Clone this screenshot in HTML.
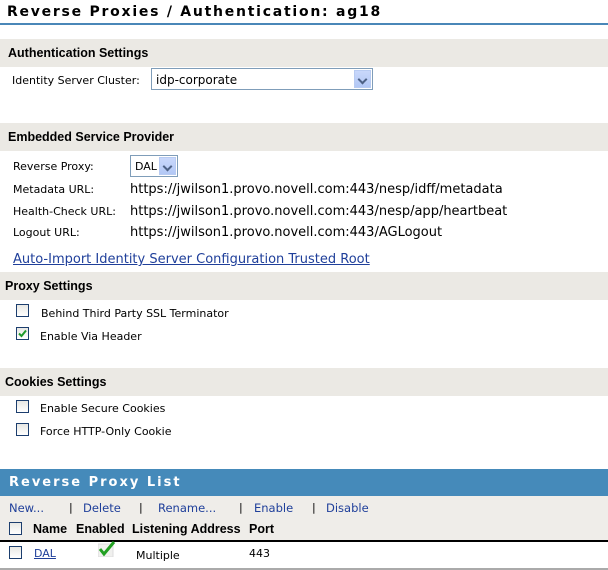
<!DOCTYPE html>
<html><head><style>
*{margin:0;padding:0;box-sizing:border-box}
body{width:608px;height:570px;position:relative;background:#fff;font-family:"DejaVu Sans",Verdana,sans-serif;font-size:11px;color:#000;overflow:hidden}
.a{position:absolute;white-space:nowrap;line-height:14px}
.hd{position:absolute;left:0;width:608px;background:#ebe9e4;font-weight:bold;font-size:12.5px;font-family:"Liberation Sans",sans-serif;padding-left:8px;line-height:28px}
.th{font-family:"Liberation Sans",sans-serif;font-weight:bold;font-size:12.5px}
.lk{color:#1f3f9a}
.cb{position:absolute;width:13px;height:13px;border:1px solid #1c3e6e;background:linear-gradient(#e8e8e4,#fff)}
.sel{position:absolute;border:1px solid #7f9db9;background:#fff}
.arr{position:absolute;right:1px;top:1px;bottom:1px;width:17px;background:linear-gradient(#c9d8fb,#b2c8f5);border:1px solid #b8cbf2}
.arr:after{content:"";position:absolute;left:4px;top:5px;width:5px;height:5px;border-right:2px solid #4d6185;border-bottom:2px solid #4d6185;transform:rotate(45deg)}
</style></head><body>
<div class="a" style="left:7px;top:3px;font-size:14px;font-weight:bold;letter-spacing:1.75px;line-height:18px">Reverse Proxies / Authentication: ag18</div>
<div style="position:absolute;left:0;top:23px;width:608px;height:2px;background:#4a87b8"></div>

<div class="hd" style="top:39px">Authentication Settings</div>
<div class="a" style="left:12px;top:74px">Identity Server Cluster:</div>
<div class="sel" style="left:151px;top:68px;width:222px;height:22px"><span class="a" style="left:4px;top:4px;font-size:12px">idp-corporate</span><div class="arr"></div></div>

<div class="hd" style="top:123px">Embedded Service Provider</div>
<div class="a" style="left:13px;top:160px">Reverse Proxy:</div>
<div class="sel" style="left:130px;top:155px;width:48px;height:22px"><span class="a" style="left:4px;top:4px">DAL</span><div class="arr"></div></div>
<div class="a" style="left:13px;top:183px">Metadata URL:</div>
<div class="a" style="left:130px;top:183px;font-size:13px">https://jwilson1.provo.novell.com:443/nesp/idff/metadata</div>
<div class="a" style="left:13px;top:205px">Health-Check URL:</div>
<div class="a" style="left:130px;top:205px;font-size:13px">https://jwilson1.provo.novell.com:443/nesp/app/heartbeat</div>
<div class="a" style="left:13px;top:226px">Logout URL:</div>
<div class="a" style="left:130px;top:226px;font-size:13px">https://jwilson1.provo.novell.com:443/AGLogout</div>
<div class="a lk" style="left:13px;top:253px;font-size:13px;text-decoration:underline">Auto-Import Identity Server Configuration Trusted Root</div>

<div class="hd" style="top:272px;padding-left:5px">Proxy Settings</div>
<div class="cb" style="left:16px;top:304px"></div>
<div class="a" style="left:41px;top:307px">Behind Third Party SSL Terminator</div>
<div class="cb" style="left:16px;top:327px"><svg width="11" height="11" style="position:absolute;left:0;top:0"><path d="M2 5.5L4.5 8L9 2.5" stroke="#1f9a2a" stroke-width="2" fill="none"/></svg></div>
<div class="a" style="left:40px;top:330px">Enable Via Header</div>

<div class="hd" style="top:368px;padding-left:5px">Cookies Settings</div>
<div class="cb" style="left:16px;top:400px"></div>
<div class="a" style="left:40px;top:402px">Enable Secure Cookies</div>
<div class="cb" style="left:16px;top:423px"></div>
<div class="a" style="left:40px;top:425px">Force HTTP-Only Cookie</div>

<div style="position:absolute;left:0;top:469px;width:608px;height:27px;background:#458aba"></div>
<div class="a" style="left:9px;top:476px;color:#fff;font-weight:bold;font-size:13px;letter-spacing:2px">Reverse Proxy List</div>
<div style="position:absolute;left:0;top:496px;width:608px;height:44px;background:#efede9"></div>
<div style="position:absolute;left:0;top:540px;width:608px;height:2px;background:#000"></div>
<div class="a lk" style="left:9px;top:501px;font-size:11.5px">New...</div>
<div class="a" style="left:69px;top:501px">|</div>
<div class="a lk" style="left:83px;top:501px;font-size:11.5px">Delete</div>
<div class="a" style="left:139px;top:501px">|</div>
<div class="a lk" style="left:158px;top:501px;font-size:11.5px">Rename...</div>
<div class="a" style="left:239px;top:501px">|</div>
<div class="a lk" style="left:254px;top:501px;font-size:11.5px">Enable</div>
<div class="a" style="left:312px;top:501px">|</div>
<div class="a lk" style="left:326px;top:501px;font-size:11.5px">Disable</div>
<div class="cb" style="left:9px;top:522px"></div>
<div class="a th" style="left:33px;top:522px">Name</div>
<div class="a th" style="left:76px;top:522px">Enabled</div>
<div class="a th" style="left:132px;top:522px">Listening Address</div>
<div class="a th" style="left:249px;top:522px">Port</div>
<div class="cb" style="left:9px;top:546px"></div>
<div class="a lk" style="left:34px;top:547px;text-decoration:underline">DAL</div>
<svg width="18" height="16" style="position:absolute;left:98px;top:541px"><rect x="0" y="3" width="15" height="13" fill="#f0f0ee" stroke="#ddd"/><path d="M2 8L6 13L16 1" stroke="#22a022" stroke-width="3" fill="none"/></svg>
<div class="a" style="left:136px;top:549px">Multiple</div>
<div class="a" style="left:249px;top:547px">443</div>
<div style="position:absolute;left:0;top:568px;width:608px;height:2px;background:#aaa"></div>
</body></html>
